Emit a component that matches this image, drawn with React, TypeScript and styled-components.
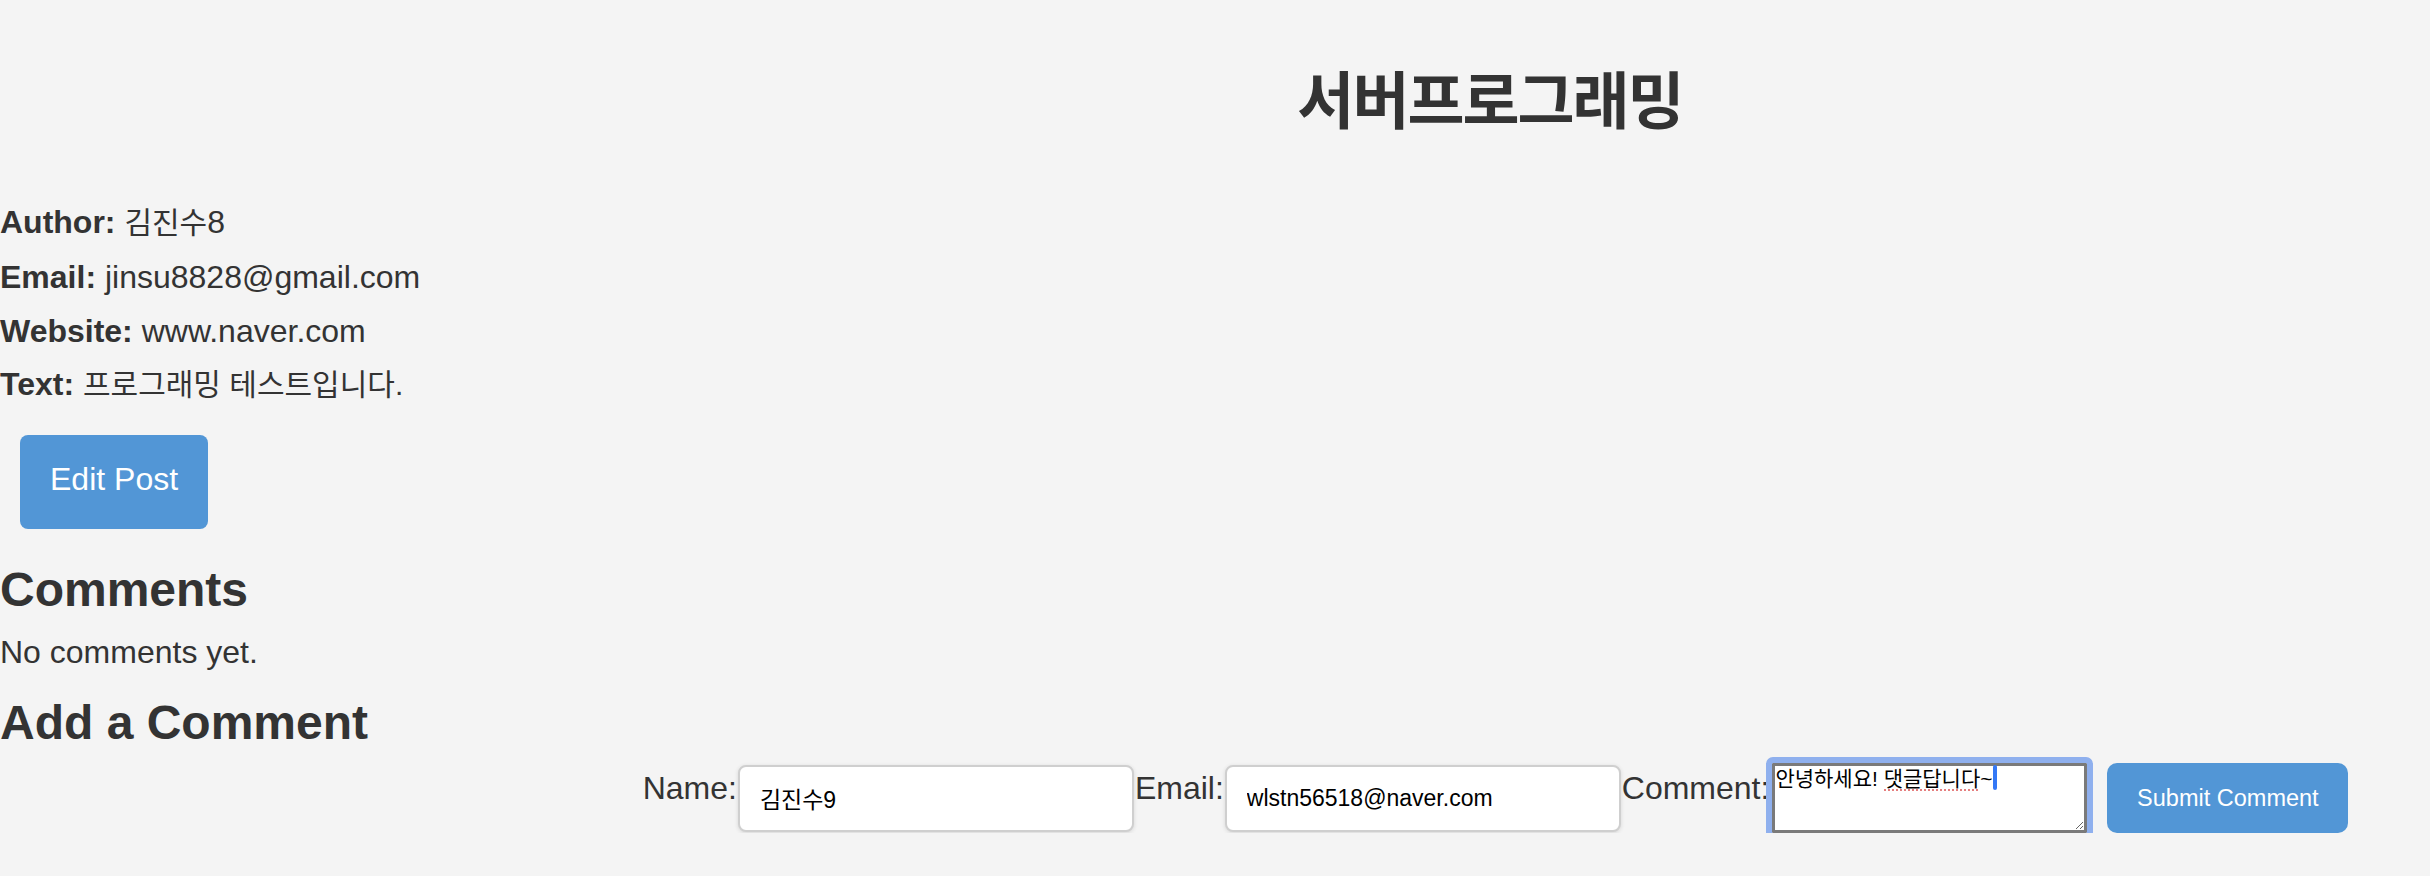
import React from "react";
import styled, { createGlobalStyle } from "styled-components";

const GlobalStyle = createGlobalStyle`
  html, body {
    margin: 0;
    padding: 0;
    background: #f4f4f4;
    overflow: hidden;
  }
  body {
    font-family: "Liberation Sans", "Noto Sans CJK KR", Arial, sans-serif;
    color: #333;
    font-size: 32px;
  }
  * { box-sizing: border-box; }
`;

const Page = styled.div`
  width: 2990px;
  display: flex;
  flex-direction: column;
`;

const Header = styled.header`
  padding-top: 66px;
  text-align: center;
`;

const Title = styled.h1`
  margin: 0;
  padding: 0 12px 0 2px;
  font-family: "Noto Sans CJK KR", sans-serif;
  font-size: 62px;
  line-height: 62px;
  letter-spacing: -2px;
  font-weight: 700;
  color: #333;
`;

const Info = styled.section`
  margin-top: 76px;
  display: flex;
  flex-direction: column;
  gap: 17px;
`;

const InfoLine = styled.p`
  margin: 0;
  line-height: 36.8px;
`;

const Key = styled.strong`
  font-weight: 700;
`;

const Ko = styled.span`
  font-size: 30px;
`;

const EditButton = styled.button`
  align-self: flex-start;
  margin: 31px 0 0 20px;
  padding: 26px 30px 31px;
  background: #5296d6;
  color: #fff;
  border: none;
  border-radius: 8px;
  font-family: "Liberation Sans", Arial, sans-serif;
  font-size: 32px;
  line-height: 36.8px;
`;

const SectionTitle = styled.h2<{ $gap: number }>`
  margin: ${(p) => p.$gap}px 0 0;
  font-size: 48px;
  line-height: 55.2px;
  font-weight: 700;
`;

const Empty = styled.p`
  margin: 17px 0 0;
  line-height: 36.8px;
`;

const CommentForm = styled.form`
  margin-top: 13px;
  display: flex;
  align-items: center;
  justify-content: center;
`;

const Label = styled.label`
  margin-bottom: 20px;
  padding: 0 1px;
  font-size: 32px;
  line-height: 36.8px;
  color: #333;
`;

const TextInput = styled.input`
  width: 396px;
  height: 67px;
  padding: 0 20px;
  border: 2px solid #cfcfcf;
  border-radius: 8px;
  background: #fff;
  font-family: "Liberation Sans", "Noto Sans CJK KR", sans-serif;
  font-size: 23px;
  color: #000;
  box-shadow: 0 1px 4px rgba(0, 0, 0, 0.12);
  outline: none;
`;

const NoteField = styled.div`
  position: relative;
  display: flex;
  margin-left: 2px;
`;

const NoteArea = styled.textarea`
  width: 315px;
  height: 70px;
  padding: 0;
  border: 3px solid #7a7a7a;
  border-radius: 1px;
  outline: 6px solid #8fb0ee;
  outline-offset: 0;
  background: #fff;
  font-family: "Liberation Sans", "Noto Sans CJK KR", sans-serif;
  font-size: 21px;
  line-height: 25px;
  color: #000;
  resize: both;
`;

const Caret = styled.span`
  position: absolute;
  left: 221px;
  top: 2px;
  width: 4px;
  height: 25px;
  border-radius: 2px;
  background: #3478f6;
  pointer-events: none;
`;

const SpellMark = styled.span`
  position: absolute;
  left: 112px;
  top: 26px;
  width: 94px;
  border-bottom: 2px dotted #e57f7f;
  pointer-events: none;
`;

const SubmitButton = styled.button`
  margin-left: 20px;
  width: 241px;
  height: 70px;
  background: #5296d6;
  color: #fff;
  border: none;
  border-radius: 10px;
  font-family: "Liberation Sans", Arial, sans-serif;
  font-size: 23.5px;
`;

export default function App() {
  return (
    <>
      <GlobalStyle />
      <Page>
        <Header>
          <Title>서버프로그래밍</Title>
        </Header>
        <Info>
          <InfoLine>
            <Key>Author:</Key> <Ko>김진수</Ko>8
          </InfoLine>
          <InfoLine>
            <Key>Email:</Key> jinsu8828@gmail.com
          </InfoLine>
          <InfoLine>
            <Key>Website:</Key> www.naver.com
          </InfoLine>
          <InfoLine>
            <Key>Text:</Key> <Ko>프로그래밍 테스트입니다.</Ko>
          </InfoLine>
        </Info>
        <EditButton type="button">Edit Post</EditButton>
        <SectionTitle $gap={33}>Comments</SectionTitle>
        <Empty>No comments yet.</Empty>
        <SectionTitle $gap={24}>Add a Comment</SectionTitle>
        <CommentForm onSubmit={(e) => e.preventDefault()}>
          <Label htmlFor="name">Name:</Label>
          <TextInput id="name" type="text" defaultValue="김진수9" />
          <Label htmlFor="email">Email:</Label>
          <TextInput id="email" type="email" defaultValue="wlstn56518@naver.com" />
          <Label htmlFor="comment">Comment:</Label>
          <NoteField>
            <NoteArea id="comment" spellCheck={false} defaultValue="안녕하세요! 댓글답니다~" />
            <SpellMark />
            <Caret />
          </NoteField>
          <SubmitButton type="submit">Submit Comment</SubmitButton>
        </CommentForm>
      </Page>
    </>
  );
}
